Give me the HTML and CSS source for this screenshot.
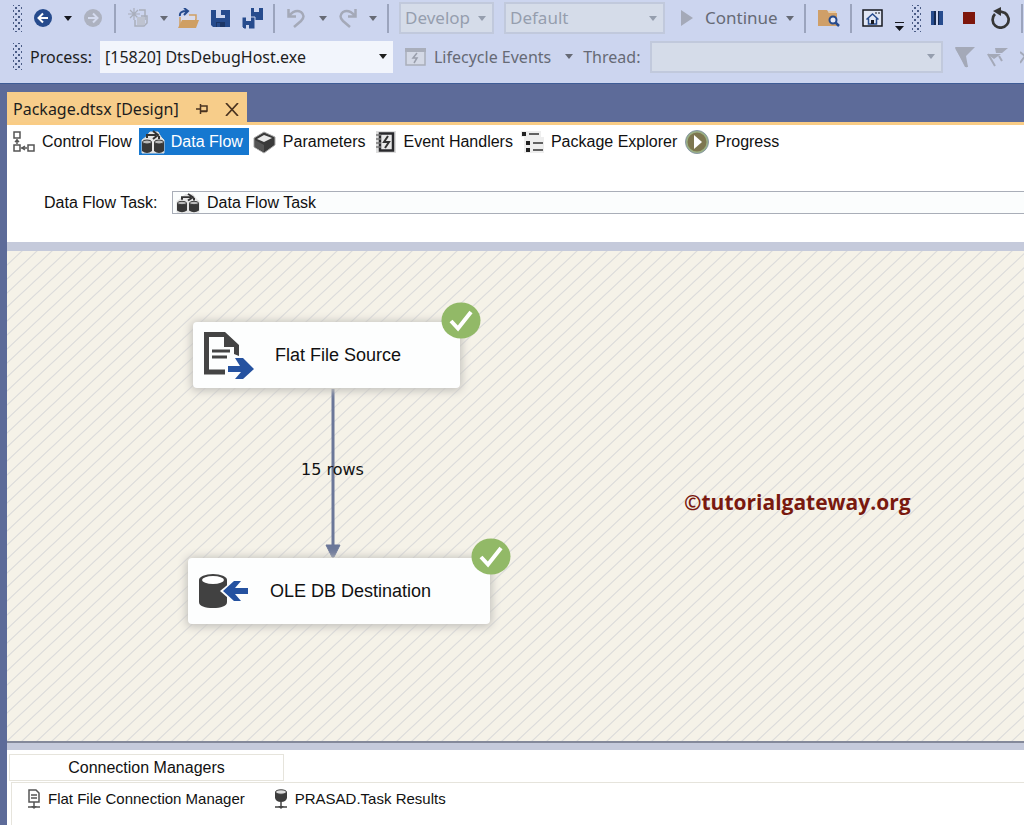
FILE: index.html
```html
<!DOCTYPE html>
<html lang="en">
<head>
<meta charset="utf-8">
<title>Package.dtsx [Design]</title>
<link rel="stylesheet" href="styles.css">
</head>
<body>
<svg class="defs" aria-hidden="true">
  <symbol id="caret" viewBox="0 0 8 5"><path d="M0 0h8L4 5z" fill="currentColor"/></symbol>
  <symbol id="tick" viewBox="0 0 40 37"><ellipse cx="20" cy="18.500" rx="19.500" ry="18" fill="#92b967"/><path d="M10 19l7 7.500L30 10" fill="none" stroke="#fff" stroke-width="4"/></symbol>
  <symbol id="floppy" viewBox="0 0 19 19"><path d="M0 1h19v17H2l-2-2z" fill="#264b8d"/><path d="M5 1h9v8H5z" fill="#ccd5ef"/><path d="M10 1h4v5h-4z" fill="#264b8d"/><path d="M5 13h9v5H5z" fill="#1c3666"/><path d="M6 14h3v4H6z" fill="#264b8d"/></symbol>
  <symbol id="dataflow" viewBox="0 0 24 24"><path d="M1 10l4-3 4-5h8l3 5 3 3v13H1z" fill="#e6e6e6" stroke="#ddd"/><path d="M6 8V5h9M12 1l5 4-5 4M18 6v3" fill="none" stroke="#333" stroke-width="2"/><path d="M1 12v9q5 4 10 0v-9zM13 12v9q5 4 10 0v-9z" fill="#383838"/><ellipse cx="6" cy="12" rx="4.500" ry="2" fill="#bbb" stroke="#333"/><ellipse cx="18" cy="12" rx="4.500" ry="2" fill="#bbb" stroke="#333"/></symbol>
</svg>
<div class="app">
  <header class="toolbars">
    <div class="bar bar-main" role="toolbar" aria-label="Standard">
      <span class="grip"></span>
      <button class="s12" aria-label="Navigate backward"><svg width="18" height="18" viewBox="0 0 18 18"><circle cx="9" cy="9" r="9" fill="#264b8d"/><path d="M14 9H5M9 4.500L4.500 9 9 13.500" fill="none" stroke="#fff" stroke-width="2"/></svg></button>
      <button class="s12 dark" aria-label="Backward history"><svg class="caret"><use href="#caret"/></svg></button>
      <button class="s12" aria-label="Navigate forward" disabled><svg width="18" height="18" viewBox="0 0 18 18"><circle cx="9" cy="9" r="9" fill="#adb2c0"/><path d="M4 9h9M9 4.500L13.500 9 9 13.500" fill="none" stroke="#d4dbef" stroke-width="2"/></svg></button>
      <span class="sep s12"></span>
      <button class="s12" aria-label="New project" disabled><svg width="20" height="20" viewBox="0 0 20 20"><g fill="none" stroke="#a9aebb"><path d="M6 0v12M0 6h12M2 2l8 8M10 2l-8 8" stroke-width="1.200"/><path d="M11 2h6v10M7 12v6h9l3-3v-7h-6" stroke-width="1.500"/></g><path d="M9 9h8v8H9z" fill="#bec3d0"/></svg></button>
      <button class="s12 mid" aria-label="New options"><svg class="caret"><use href="#caret"/></svg></button>
      <button class="s10" aria-label="Open"><svg width="21" height="20" viewBox="0 0 21 20"><path d="M2 9v10h14l2-8V7h-7" fill="#d9dcec" stroke="#cf9f63" stroke-width="1.500"/><path d="M4 12h17l-3 8H0z" fill="#cf9f63"/><path d="M2 8q-1-5 7-5M6 0l4 3-4 4" fill="none" stroke="#264b8d" stroke-width="2"/></svg></button>
      <button class="s12" aria-label="Save"><svg width="19" height="19"><use href="#floppy"/></svg></button>
      <button class="s12" aria-label="Save all"><svg width="21" height="21" viewBox="0 0 21 21"><path d="M9 0h12v12H11l-2-2z" fill="#264b8d"/><path d="M12 0h5v4h-5z" fill="#ccd5ef"/><path d="M0 9h13v12H2l-2-2z" fill="#264b8d" stroke="#ccd5ef" stroke-width="1"/><path d="M4 9h5v4H4zM4 17h3v4H4z" fill="#ccd5ef"/></svg></button>
      <span class="sep s10"></span>
      <button class="s12" aria-label="Undo" disabled><svg width="18" height="20" viewBox="0 0 18 20"><path d="M1.500 1v7.500H9M2 8Q8 1 14 4q5 4 0 9l-7 6" fill="none" stroke="#a4a9b8" stroke-width="2.500"/></svg></button>
      <button class="s14 mid" aria-label="Undo history"><svg class="caret"><use href="#caret"/></svg></button>
      <button class="s12" aria-label="Redo" disabled><svg width="18" height="20" viewBox="0 0 18 20"><path d="M16.500 1v7.500H9M16 8Q10 1 4 4q-5 4 0 9l7 6" fill="none" stroke="#a4a9b8" stroke-width="2.500"/></svg></button>
      <button class="s12 mid" aria-label="Redo history"><svg class="caret"><use href="#caret"/></svg></button>
      <span class="sep s10"></span>
      <span class="combo off short s10"><select aria-label="Solution configuration" disabled><option>Develop</option></select><svg class="caret"><use href="#caret"/></svg></span>
      <span class="combo off wide s10"><select aria-label="Solution platform" disabled><option>Default</option></select><svg class="caret"><use href="#caret"/></svg></span>
      <button class="s16 mid text cont" disabled><svg width="12" height="18" viewBox="0 0 12 18"><path d="M0 1l12 8-12 8z" fill="#a4a9b8"/></svg><span>Continue</span></button>
      <button class="s8 mid" aria-label="Continue options"><svg class="caret"><use href="#caret"/></svg></button>
      <span class="sep s10"></span>
      <button class="s12" aria-label="Find in files"><svg width="22" height="18" viewBox="0 0 22 18"><path d="M0 1h9l2 3h8v13H0z" fill="#cf9f68"/><path d="M10 2h8v2h-7z" fill="#e8cda8"/><circle cx="15" cy="11" r="3.500" fill="#e7eaf6" stroke="#264b8d" stroke-width="2"/><path d="M17.500 13.500L21 17" stroke="#264b8d" stroke-width="2.500"/></svg></button>
      <span class="sep s10"></span>
      <button class="s10" aria-label="Start page"><svg width="21" height="18" viewBox="0 0 21 18"><path d="M1 1h19v16H1z" fill="#e0e6f5" stroke="#16181f" stroke-width="1.500"/><path d="M13 4h2M16 4h2" stroke="#16181f"/><path d="M4.500 10.500l6-5.500 6 5.500M6.500 9.500V15h8V9.500" fill="none" stroke="#264b8d" stroke-width="1.500"/><path d="M9 11h3v4H9z" fill="#16181f"/></svg></button>
      <button class="s12 dark" aria-label="Toolbar options"><svg width="9" height="26" viewBox="0 0 9 26"><path d="M0 17h9v1H0zM0 21h9l-4.500 5z" fill="currentColor"/></svg></button>
      <span class="grip s8"></span>
      <button class="s10" aria-label="Break all"><svg width="12" height="14" viewBox="0 0 12 14"><path d="M0 0h5v14H0zM7 0h5v14H7z" fill="#264b8d"/><path d="M3 0h2v14H3zM7 0h1v14H7z" fill="#14284f"/></svg></button>
      <button class="s20" aria-label="Stop debugging"><svg width="12" height="12" viewBox="0 0 12 12"><path d="M0 0h12v12H0z" fill="#7d160b"/></svg></button>
      <button class="s16" aria-label="Restart"><svg width="20" height="22" viewBox="0 0 20 22"><path d="M4 7a8 8 0 1 0 10-1L8 4" fill="none" stroke="#363636" stroke-width="2.700"/><path d="M2 4l8-4v9z" fill="#363636"/></svg></button>
      <span class="sep s10"></span>
    </div>
    <div class="bar bar-debug" role="toolbar" aria-label="Debug location">
      <span class="grip"></span>
      <label class="s8" for="proc">Process:</label>
      <span class="combo proc s8"><select id="proc"><option>[15820] DtsDebugHost.exe</option></select><svg class="caret"><use href="#caret"/></svg></span>
      <button class="s12 mid text life" disabled><svg width="21" height="18" viewBox="0 0 21 18"><path d="M1 1h19v16H1z" fill="#d4d9e6" stroke="#a9aebb" stroke-width="1.500"/><path d="M0 0h21v4H0z" fill="#a9aebb"/><path d="M12 5l-4 5h4l-3 5" fill="none" stroke="#9a9fac" stroke-width="1.500"/></svg><span>Lifecycle Events</span></button>
      <button class="s14 mid" aria-label="Lifecycle options"><svg class="caret"><use href="#caret"/></svg></button>
      <label class="s10 mid" for="thread">Thread:</label>
      <span class="combo off thread s10"><select id="thread" disabled><option></option></select><svg class="caret"><use href="#caret"/></svg></span>
      <button class="s12" aria-label="Flag thread" disabled><svg width="20" height="22" viewBox="0 0 20 22"><path d="M0 1h20l-9 9 2 11h-3z" fill="#a4a9b8"/><path d="M1 2l11 19" stroke="#a4a9b8" stroke-width="2"/></svg></button>
      <button class="s12" aria-label="Show flagged threads" disabled><svg width="21" height="20" viewBox="0 0 21 20"><path d="M8 1h13l-6 5H9zM0 7h14l-7 5z" fill="#a4a9b8"/><path d="M1 7l7 12M12 9l3 5" fill="none" stroke="#a4a9b8" stroke-width="2"/></svg></button>
      <button class="s12" aria-label="Toggle threads" disabled><svg width="16" height="16" viewBox="0 0 16 16"><path d="M0 3l5 4-5 7M5 7l8-6" fill="none" stroke="#a4a9b8" stroke-width="2"/></svg></button>
    </div>
  </header>

  <main class="document">
    <div class="doc-tabs">
      <div class="doc-tab"><span>Package.dtsx [Design]</span>
        <button aria-label="Pin tab"><svg width="12" height="10" viewBox="0 0 12 10"><path d="M0 5h4M4.500 0v10M5 2h6v5H5M5 7.500h6" fill="none" stroke="#4a3320" stroke-width="1.500"/></svg></button>
        <button aria-label="Close tab"><svg width="14" height="13" viewBox="0 0 14 13"><path d="M1 0l12 13M13 0L1 13" stroke="#4a3320" stroke-width="1.700"/></svg></button>
      </div>
    </div>
    <section class="designer">
      <nav class="views">
        <button class="view"><svg width="24" height="24" viewBox="0 0 24 24"><g fill="#fff" stroke="#555" stroke-width="1.500"><path d="M2 2h6v6H2zM2 15h6v6H2zM16 15h6v6h-6z"/><path d="M5 9v5M3 12l2-2 2 2M9 18h6M13 16l-3 2 3 2"/></g></svg>Control Flow</button>
        <button class="view current" aria-current="page"><svg width="24" height="24"><use href="#dataflow"/></svg>Data Flow</button>
        <button class="view"><svg width="24" height="24" viewBox="0 0 24 24"><path d="M11 2l11 5v8l-11 8-10-6V8z" fill="#3a3a3a" stroke="#aaa"/><path d="M11 5l8 3-8 4-7-3z" fill="#e8e8e8"/><path d="M2 10l9 5v7l-9-5z" fill="#555"/></svg>Parameters</button>
        <button class="view"><svg width="24" height="24" viewBox="0 0 24 24"><path d="M2 1h20v22H2z" fill="#ddd"/><path d="M6 3.500h13v17H6z" fill="#e8e8e8" stroke="#29292c" stroke-width="2.500"/><path d="M2 5h5M2 9h5M2 13h5M2 17h5" stroke="#777" stroke-width="1.500"/><path d="M14 6l-4 6h5l-4 6" fill="none" stroke="#333" stroke-width="2"/></svg>Event Handlers</button>
        <button class="view"><svg width="24" height="24" viewBox="0 0 24 24"><path d="M0 1h20v6h3v16H3V7H0z" fill="#eee"/><path d="M1 2h4v4H1zM5 11h4v4H5zM5 18h4v4H5z" fill="#222"/><path d="M8 4h10M12 13h10M12 20h10" stroke="#333" stroke-width="1.500"/></svg>Package Explorer</button>
        <button class="view"><svg width="24" height="24" viewBox="0 0 24 24"><circle cx="12" cy="12" r="10.500" fill="#7e7750" stroke="#9bb083" stroke-width="2"/><circle cx="12" cy="12" r="11.500" fill="none" stroke="#8797a5"/><path d="M9 5l8 7-8 7z" fill="#fff"/></svg>Progress</button>
      </nav>
      <div class="task-row">
        <label for="task">Data Flow Task:</label>
        <div class="task-box"><svg width="24" height="20" viewBox="0 0 24 24" preserveAspectRatio="none"><use href="#dataflow" width="24" height="24"/></svg><select id="task"><option>Data Flow Task</option></select></div>
      </div>
      <div class="canvas">
        <svg class="hatch" width="100%" height="100%" aria-hidden="true"><defs><pattern id="lines" width="15" height="14" patternUnits="userSpaceOnUse"><path d="M-15 14L15-14M0 14L15 0M0 28L30 0" stroke="#dcdcdb" stroke-width="1.200"/></pattern></defs><rect width="100%" height="100%" fill="url(#lines)"/></svg>
        <svg class="path" width="16" height="169" viewBox="0 0 16 169"><path d="M8 0v158" stroke="#6b7799" stroke-width="3"/><path d="M1 156h14l-6 12H7z" fill="#6b7799" stroke="#6b7799" stroke-linejoin="round"/></svg>
        <span class="rows">15 rows</span>
        <div class="node source">
          <svg width="52" height="50" viewBox="0 0 52 50"><path d="M22 4.500H3.500V42H22" fill="none" stroke="#444" stroke-width="5"/><path d="M22 2l14 13v11l-5-2v-7H21V7z" fill="#444"/><path d="M9 21h18M9 27h15" stroke="#444" stroke-width="3"/><path d="M25 36h12l-5-8h8l11 11-11 10h-8l6-7H25z" fill="#2552a0"/></svg>
          <span>Flat File Source</span>
          <svg class="ok" width="40" height="37"><use href="#tick"/></svg>
        </div>
        <div class="node dest">
          <svg width="52" height="50" viewBox="0 0 52 50"><path d="M1 14v22c0 4 6 6 14 6s14-2 14-6V14z" fill="#414141"/><ellipse cx="15" cy="14" rx="14" ry="6" fill="#414141"/><ellipse cx="15" cy="14" rx="11" ry="4" fill="#fff"/><path d="M22 25l16-13 8 9v9l-8 9z" fill="#fdfefe"/><path d="M25 25l11-10h7l-6 7h13v6H37l6 7h-7z" fill="#2552a0"/></svg>
          <span>OLE DB Destination</span>
          <svg class="ok" width="40" height="37"><use href="#tick"/></svg>
        </div>
        <span class="mark">©tutorialgateway.org</span>
      </div>
      <section class="connections">
        <h2>Connection Managers</h2>
        <div class="conn-list">
          <button><svg width="14" height="20" viewBox="0 0 14 20"><path d="M2 1h7l3 3v9H2z" fill="#fff" stroke="#555" stroke-width="1.500"/><path d="M4 6h6M4 9h6M7 13v5M1 18h12" stroke="#555" stroke-width="1.500"/><path d="M4 17h6l-3 3z" fill="#555"/></svg>Flat File Connection Manager</button>
          <button><svg width="14" height="20" viewBox="0 0 14 20"><path d="M1 3v6q1 4 6 4t6-4V3z" fill="#3c3c3c"/><ellipse cx="7" cy="3" rx="5.500" ry="2.200" fill="#ddd" stroke="#3c3c3c"/><path d="M7 12v6M1 18h12" stroke="#444" stroke-width="1.500"/><path d="M4 17h6l-3 3z" fill="#444"/></svg>PRASAD.Task Results</button>
        </div>
      </section>
    </section>
  </main>
</div>
</body>
</html>
```
FILE: styles.css
```css
* { box-sizing: border-box; }
body { margin: 0; font: 16px/20px "Liberation Sans", Arial, sans-serif; color: #111; }
.defs { position: absolute; width: 0; height: 0; }
.app { display: flex; flex-direction: column; min-height: 100vh; overflow: hidden; background: #5d6b99; }
button { border: 0; padding: 0; background: none; font: inherit; color: inherit; display: flex; align-items: center; flex: none; white-space: nowrap; }
select { appearance: none; border: 0; background: none; font: inherit; color: inherit; opacity: 1; width: 100%; padding: 0 5px; }
svg { display: block; flex: none; }

/* toolbars */
.toolbars { background: #ccd5ef; border-bottom: 1px solid #3e5c96; padding-bottom: 6px; font: 17px/24px "Noto Sans", "Open Sans", sans-serif; color: #1e1e1e; }
.bar { display: flex; align-items: center; padding-left: 13px; overflow: hidden; white-space: nowrap; }
.bar > * { flex: none; }
.bar-main { height: 36px; }
.bar-debug { height: 41px; font-size: 16px; }
.grip { width: 9px; height: 27px; background: radial-gradient(circle, #4a5c86 0 1px, transparent 1px) 0 0 / 6px 6px, radial-gradient(circle, #4a5c86 0 1px, transparent 1px) 3px 3px / 6px 6px; }
.sep { width: 2px; height: 29px; background: #9ba4bd; }
.caret { width: 8px; height: 5px; }
.dark { color: #16181f; }
.mid { color: #666a75; }
.s8 { margin-left: 8px; }
.s10 { margin-left: 10px; }
.s12 { margin-left: 12px; }
.s14 { margin-left: 14px; }
.s16 { margin-left: 16px; }
.s20 { margin-left: 20px; }
.text { gap: 8px; }
.cont { gap: 12px; }
.combo { display: grid; align-items: center; height: 32px; background: #f2f5fc; }
.combo select, .combo .caret { grid-area: 1 / 1; }
.combo .caret { justify-self: end; margin-right: 6px; pointer-events: none; }
.combo.off { background: #d5dce9; border: 2px solid #c1c9dc; color: #959eae; }
.combo.off select { padding: 0 4px; }
.short { width: 95px; }
.wide { width: 161px; }
.proc, .thread { width: 293px; }

/* document well */
.document { flex: 1; display: flex; flex-direction: column; padding: 8px 0 0 7px; }
.doc-tabs { border-bottom: 3px solid #f9cc85; }
.doc-tab { display: inline-flex; align-items: center; gap: 17px; height: 30px; padding: 4px 8px 0 6px; background: #f7cd8a; font: 16px/24px "Noto Sans", "Open Sans", sans-serif; color: #1e1e1e; vertical-align: top; }
.designer { flex: 1; display: flex; flex-direction: column; background: #fff; }
.views { display: flex; gap: 8px; padding: 3px 0 0 5px; }
.view { height: 27px; gap: 6px; }
.current { background: #1678d0; color: #fff; padding: 0 6px 0 2px; margin: 0 -4px 0 -1px; }
.task-row { display: flex; align-items: center; padding: 36px 0 28px 37px; }
.task-row label { width: 128px; }
.task-box { flex: 1; display: flex; align-items: center; height: 23px; border: 1px solid #a9aeb8; border-right: 0; background: #fbfdfd; padding-left: 3px; gap: 2px; }

/* design surface */
.canvas { position: relative; flex: 1; min-height: 400px; overflow: hidden; border-top: 9px solid #c5cadb; border-bottom: 2px solid #84899a; background: #f5f2e8; }
.hatch { position: absolute; inset: 0; }
.node { position: absolute; display: flex; align-items: center; height: 66px; border-radius: 4px; background: #fdfefe; box-shadow: 0 1px 9px 2px #c4c2be; font-size: 18px; }
.node > span { margin-left: 20px; }
.source { left: 186px; top: 71px; width: 267px; padding-left: 10px; }
.dest { left: 181px; top: 307px; width: 302px; padding-left: 10px; }
.ok { position: absolute; right: -21px; top: -20px; }
.path { position: absolute; left: 318px; top: 138px; }
.rows { position: absolute; left: 294px; top: 209px; font: 16px/20px "DejaVu Sans", Verdana, sans-serif; }
.mark { position: absolute; left: 677px; top: 237px; font: bold 21px/28px "Open Sans", "Noto Sans", sans-serif; color: #79190f; }

/* connection managers */
.connections { border-top: 7px solid #c5cadb; padding: 4px 0 0 2px; }
.connections h2 { width: 275px; margin: 0; border: 1px solid #e6e4dc; font: 16px/25px "Liberation Sans", Arial, sans-serif; text-align: center; }
.conn-list { display: flex; gap: 29px; margin: 1px 0 0 2px; height: 43px; padding: 6px 0 0 15px; border: 1px solid #e6e4dc; border-width: 1px 0 0 1px; }
.conn-list button { height: 20px; gap: 7px; font-size: 15px; }
```
